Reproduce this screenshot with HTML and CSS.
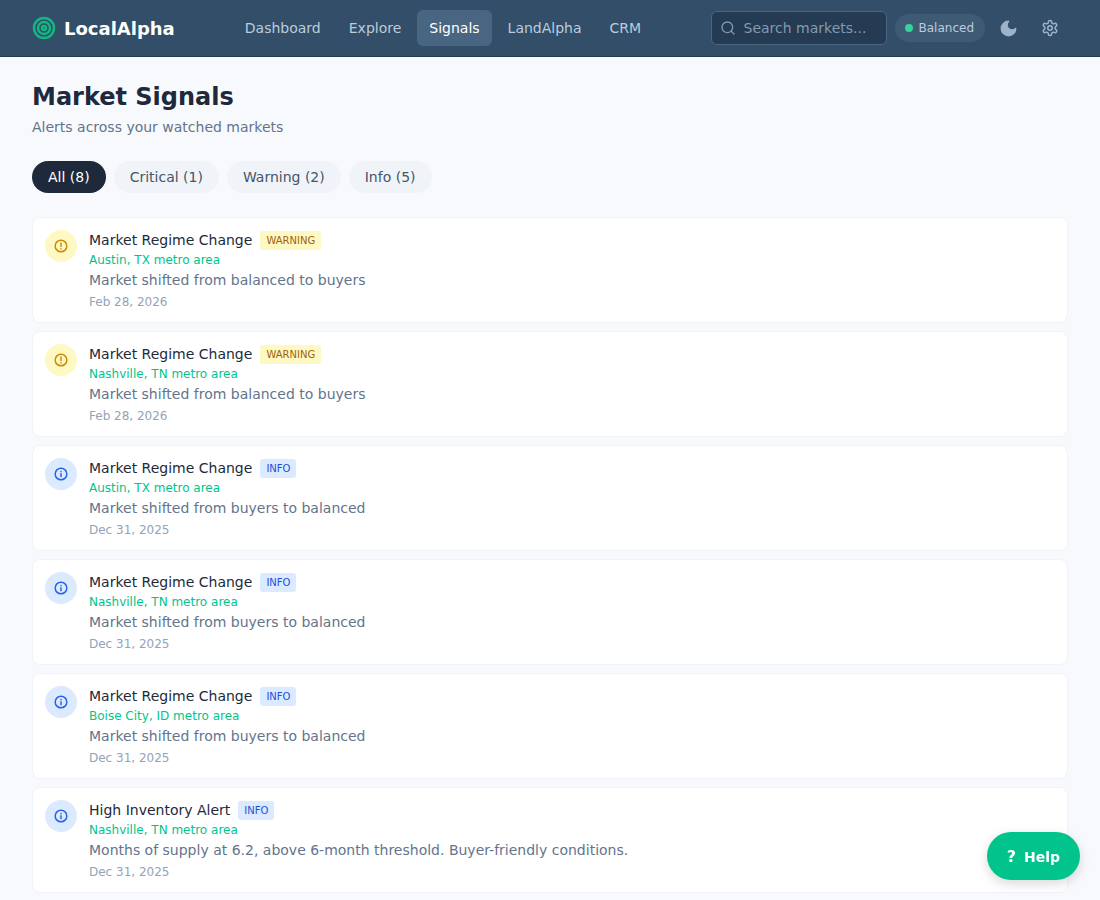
FILE: index.html
```html
<!DOCTYPE html>
<html lang="en">

<head>
    <meta charset="UTF-8">
    <meta name="viewport" content="width=device-width, initial-scale=1.0">
    <title>Market Signals</title>
    <link rel="stylesheet" href="styles.css">
</head>

<body>
    <!-- TOP BAR -->
    <header class="topbar">
        <a class="logo" href="#">
            <svg width="24" height="24" viewBox="0 0 24 24" fill="none" stroke="#10b981" stroke-width="2.4">
                <circle cx="12" cy="12" r="10"></circle>
                <circle cx="12" cy="12" r="6"></circle>
                <circle cx="12" cy="12" r="2"></circle>
            </svg>
            <span>LocalAlpha</span>
        </a>
        <nav class="nav">
            <a href="#">Dashboard</a>
            <a href="#">Explore</a>
            <a href="#" class="active">Signals</a>
            <a href="#">LandAlpha</a>
            <a href="#">CRM</a>
        </nav>
        <div class="tools">
            <label class="search">
                <svg width="16" height="16" viewBox="0 0 24 24" fill="none" stroke="#829ab1" stroke-width="2" stroke-linecap="round">
                    <circle cx="11" cy="11" r="8"></circle>
                    <path d="M21 21l-4.3-4.3"></path>
                </svg>
                <input type="text" placeholder="Search markets...">
            </label>
            <div class="regime"><i></i>Balanced</div>
            <button class="iconBtn moon">
                <svg width="19" height="19" viewBox="0 0 24 24" fill="#9fb3c8" stroke="#9fb3c8" stroke-width="2" stroke-linejoin="round">
                    <path d="M12 3a6 6 0 0 0 9 9 9 9 0 1 1-9-9Z"></path>
                </svg>
            </button>
            <button class="iconBtn gear">
                <svg width="18" height="18" viewBox="0 0 24 24" fill="none" stroke="#9fb3c8" stroke-width="2" stroke-linecap="round" stroke-linejoin="round">
                    <path d="M12.22 2h-.44a2 2 0 0 0-2 2v.18a2 2 0 0 1-1 1.73l-.43.25a2 2 0 0 1-2 0l-.15-.08a2 2 0 0 0-2.73.73l-.22.38a2 2 0 0 0 .73 2.73l.15.1a2 2 0 0 1 1 1.72v.51a2 2 0 0 1-1 1.74l-.15.09a2 2 0 0 0-.73 2.73l.22.38a2 2 0 0 0 2.73.73l.15-.08a2 2 0 0 1 2 0l.43.25a2 2 0 0 1 1 1.73V20a2 2 0 0 0 2 2h.44a2 2 0 0 0 2-2v-.18a2 2 0 0 1 1-1.73l.43-.25a2 2 0 0 1 2 0l.15.08a2 2 0 0 0 2.73-.73l.22-.39a2 2 0 0 0-.73-2.73l-.15-.08a2 2 0 0 1-1-1.74v-.5a2 2 0 0 1 1-1.74l.15-.09a2 2 0 0 0 .73-2.73l-.22-.38a2 2 0 0 0-2.73-.73l-.15.08a2 2 0 0 1-2 0l-.43-.25a2 2 0 0 1-1-1.73V4a2 2 0 0 0-2-2z"></path>
                    <circle cx="12" cy="12" r="3"></circle>
                </svg>
            </button>
        </div>
    </header>

    <main class="page">
        <h1>Market Signals</h1>
        <p class="subtitle">Alerts across your watched markets</p>

        <!-- FILTERS -->
        <div class="filters">
            <button class="pill active">All (8)</button>
            <button class="pill">Critical (1)</button>
            <button class="pill">Warning (2)</button>
            <button class="pill">Info (5)</button>
        </div>

        <!-- SIGNALS -->
        <div class="signals">
            <article class="card">
                <div class="icon warning">
                    <svg width="14" height="14" viewBox="0 0 24 24" fill="none" stroke="currentColor" stroke-width="2.5" stroke-linecap="round">
                        <circle cx="12" cy="12" r="10"></circle>
                        <path d="M12 7v6M12 16.5v.5"></path>
                    </svg>
                </div>
                <div class="body">
                    <div class="title">Market Regime Change <span class="badge warning">WARNING</span></div>
                    <div class="market">Austin, TX metro area</div>
                    <div class="message">Market shifted from balanced to buyers</div>
                    <div class="date">Feb 28, 2026</div>
                </div>
            </article>

            <article class="card">
                <div class="icon warning">
                    <svg width="14" height="14" viewBox="0 0 24 24" fill="none" stroke="currentColor" stroke-width="2.5" stroke-linecap="round">
                        <circle cx="12" cy="12" r="10"></circle>
                        <path d="M12 7v6M12 16.5v.5"></path>
                    </svg>
                </div>
                <div class="body">
                    <div class="title">Market Regime Change <span class="badge warning">WARNING</span></div>
                    <div class="market">Nashville, TN metro area</div>
                    <div class="message">Market shifted from balanced to buyers</div>
                    <div class="date">Feb 28, 2026</div>
                </div>
            </article>

            <article class="card">
                <div class="icon info">
                    <svg width="14" height="14" viewBox="0 0 24 24" fill="none" stroke="currentColor" stroke-width="2.5" stroke-linecap="round">
                        <circle cx="12" cy="12" r="10"></circle>
                        <path d="M12 11.5v5M12 7.5v.5"></path>
                    </svg>
                </div>
                <div class="body">
                    <div class="title">Market Regime Change <span class="badge info">INFO</span></div>
                    <div class="market">Austin, TX metro area</div>
                    <div class="message">Market shifted from buyers to balanced</div>
                    <div class="date">Dec 31, 2025</div>
                </div>
            </article>

            <article class="card">
                <div class="icon info">
                    <svg width="14" height="14" viewBox="0 0 24 24" fill="none" stroke="currentColor" stroke-width="2.5" stroke-linecap="round">
                        <circle cx="12" cy="12" r="10"></circle>
                        <path d="M12 11.5v5M12 7.5v.5"></path>
                    </svg>
                </div>
                <div class="body">
                    <div class="title">Market Regime Change <span class="badge info">INFO</span></div>
                    <div class="market">Nashville, TN metro area</div>
                    <div class="message">Market shifted from buyers to balanced</div>
                    <div class="date">Dec 31, 2025</div>
                </div>
            </article>

            <article class="card">
                <div class="icon info">
                    <svg width="14" height="14" viewBox="0 0 24 24" fill="none" stroke="currentColor" stroke-width="2.5" stroke-linecap="round">
                        <circle cx="12" cy="12" r="10"></circle>
                        <path d="M12 11.5v5M12 7.5v.5"></path>
                    </svg>
                </div>
                <div class="body">
                    <div class="title">Market Regime Change <span class="badge info">INFO</span></div>
                    <div class="market">Boise City, ID metro area</div>
                    <div class="message">Market shifted from buyers to balanced</div>
                    <div class="date">Dec 31, 2025</div>
                </div>
            </article>

            <article class="card">
                <div class="icon info">
                    <svg width="14" height="14" viewBox="0 0 24 24" fill="none" stroke="currentColor" stroke-width="2.5" stroke-linecap="round">
                        <circle cx="12" cy="12" r="10"></circle>
                        <path d="M12 11.5v5M12 7.5v.5"></path>
                    </svg>
                </div>
                <div class="body">
                    <div class="title">High Inventory Alert <span class="badge info">INFO</span></div>
                    <div class="market">Nashville, TN metro area</div>
                    <div class="message">Months of supply at 6.2, above 6-month threshold. Buyer-friendly conditions.</div>
                    <div class="date">Dec 31, 2025</div>
                </div>
            </article>
        </div>
    </main>

    <button class="help"><span>?</span> Help</button>
</body>

</html>
```

FILE: styles.css
```css
* {
    box-sizing: border-box;
}

body {
    margin: 0;
    background: #f7f9fc;
    color: #1e293b;
    font-family: "DejaVu Sans", sans-serif;
}

a {
    text-decoration: none;
}

.topbar {
    display: flex;
    align-items: center;
    height: 57px;
    padding: 0 32px;
    background: #334e68;
    border-bottom: 1px solid #243b53;
}

.logo {
    display: flex;
    align-items: center;
    gap: 8px;
    color: #fff;
    font-size: 18px;
    font-weight: 700;
}

.nav {
    display: flex;
    gap: 4px;
    margin-left: 58px;
}

.nav a {
    padding: 10px 12px;
    border-radius: 6px;
    color: #bcccdc;
    font-size: 14px;
    line-height: 16px;
}

.nav a.active {
    background: #486581;
    color: #fff;
}

.tools {
    display: flex;
    align-items: center;
    margin-left: auto;
}

.search {
    display: flex;
    align-items: center;
    gap: 8px;
    width: 176px;
    height: 34px;
    padding: 0 8px;
    background: #243b53;
    border: 1px solid #486581;
    border-radius: 6px;
}

.search svg {
    flex-shrink: 0;
}

.search input {
    width: 100%;
    min-width: 0;
    padding: 0;
    border: none;
    outline: none;
    background: none;
    color: #fff;
    font-family: inherit;
    font-size: 14px;
}

.search input::placeholder {
    color: #829ab1;
    opacity: 1;
}

.regime {
    display: flex;
    align-items: center;
    gap: 6px;
    height: 28px;
    margin-left: 8px;
    padding: 0 11px 0 10px;
    background: #3e5a74;
    border-radius: 14px;
    color: #bcccdc;
    font-size: 12px;
}

.regime i {
    width: 8px;
    height: 8px;
    border-radius: 50%;
    background: #34d399;
}

.iconBtn {
    display: flex;
    padding: 6px;
    border: none;
    background: none;
}

.iconBtn.moon {
    margin-left: 8px;
}

.iconBtn.gear {
    margin-left: 11px;
    margin-right: 3px;
}

.page {
    padding: 24px 32px 7px;
}

h1 {
    margin: 0;
    font-size: 24px;
    line-height: 32px;
    font-weight: 700;
}

.subtitle {
    margin: 4px 0 0;
    color: #64748b;
    font-size: 14px;
    line-height: 20px;
}

.filters {
    display: flex;
    gap: 8px;
    margin: 24px 0;
}

.pill {
    height: 32px;
    padding: 0 16px;
    border: none;
    border-radius: 16px;
    background: #f0f4f8;
    color: #475569;
    font-family: inherit;
    font-size: 14px;
}

.pill.active {
    background: #1e293b;
    color: #fff;
}

.signals {
    display: flex;
    flex-direction: column;
    gap: 8px;
}

.card {
    display: flex;
    gap: 12px;
    height: 106px;
    padding: 12px;
    background: #fff;
    border: 1px solid #f0f4f8;
    border-radius: 8px;
}

.icon {
    display: flex;
    align-items: center;
    justify-content: center;
    flex-shrink: 0;
    width: 32px;
    height: 32px;
    border-radius: 50%;
}

.icon.warning {
    background: #fef9c3;
    color: #ca8a04;
}

.icon.info {
    background: #dbeafe;
    color: #2563eb;
}

.title {
    display: flex;
    align-items: center;
    gap: 8px;
    font-size: 14px;
    line-height: 20px;
}

.badge {
    padding: 0 6px;
    border-radius: 3px;
    font-size: 10px;
    line-height: 19px;
}

.badge.warning {
    background: #fef9c3;
    color: #a16207;
}

.badge.info {
    background: #dbeafe;
    color: #1d4ed8;
}

.market {
    margin-top: 1px;
    color: #00c48c;
    font-size: 12px;
    line-height: 18px;
}

.message {
    margin-top: 1px;
    color: #64748b;
    font-size: 14px;
    line-height: 20px;
}

.date {
    margin-top: 3px;
    color: #94a3b8;
    font-size: 12px;
    line-height: 18px;
}

.help {
    position: fixed;
    right: 20px;
    bottom: 20px;
    height: 48px;
    padding: 0 20px;
    border: none;
    border-radius: 24px;
    background: #00c48c;
    box-shadow: 0 4px 12px rgba(0, 0, 0, 0.15);
    color: #fff;
    font-family: inherit;
    font-size: 14px;
    font-weight: 700;
}

.help span {
    margin-right: 3px;
    font-size: 16px;
}
```
